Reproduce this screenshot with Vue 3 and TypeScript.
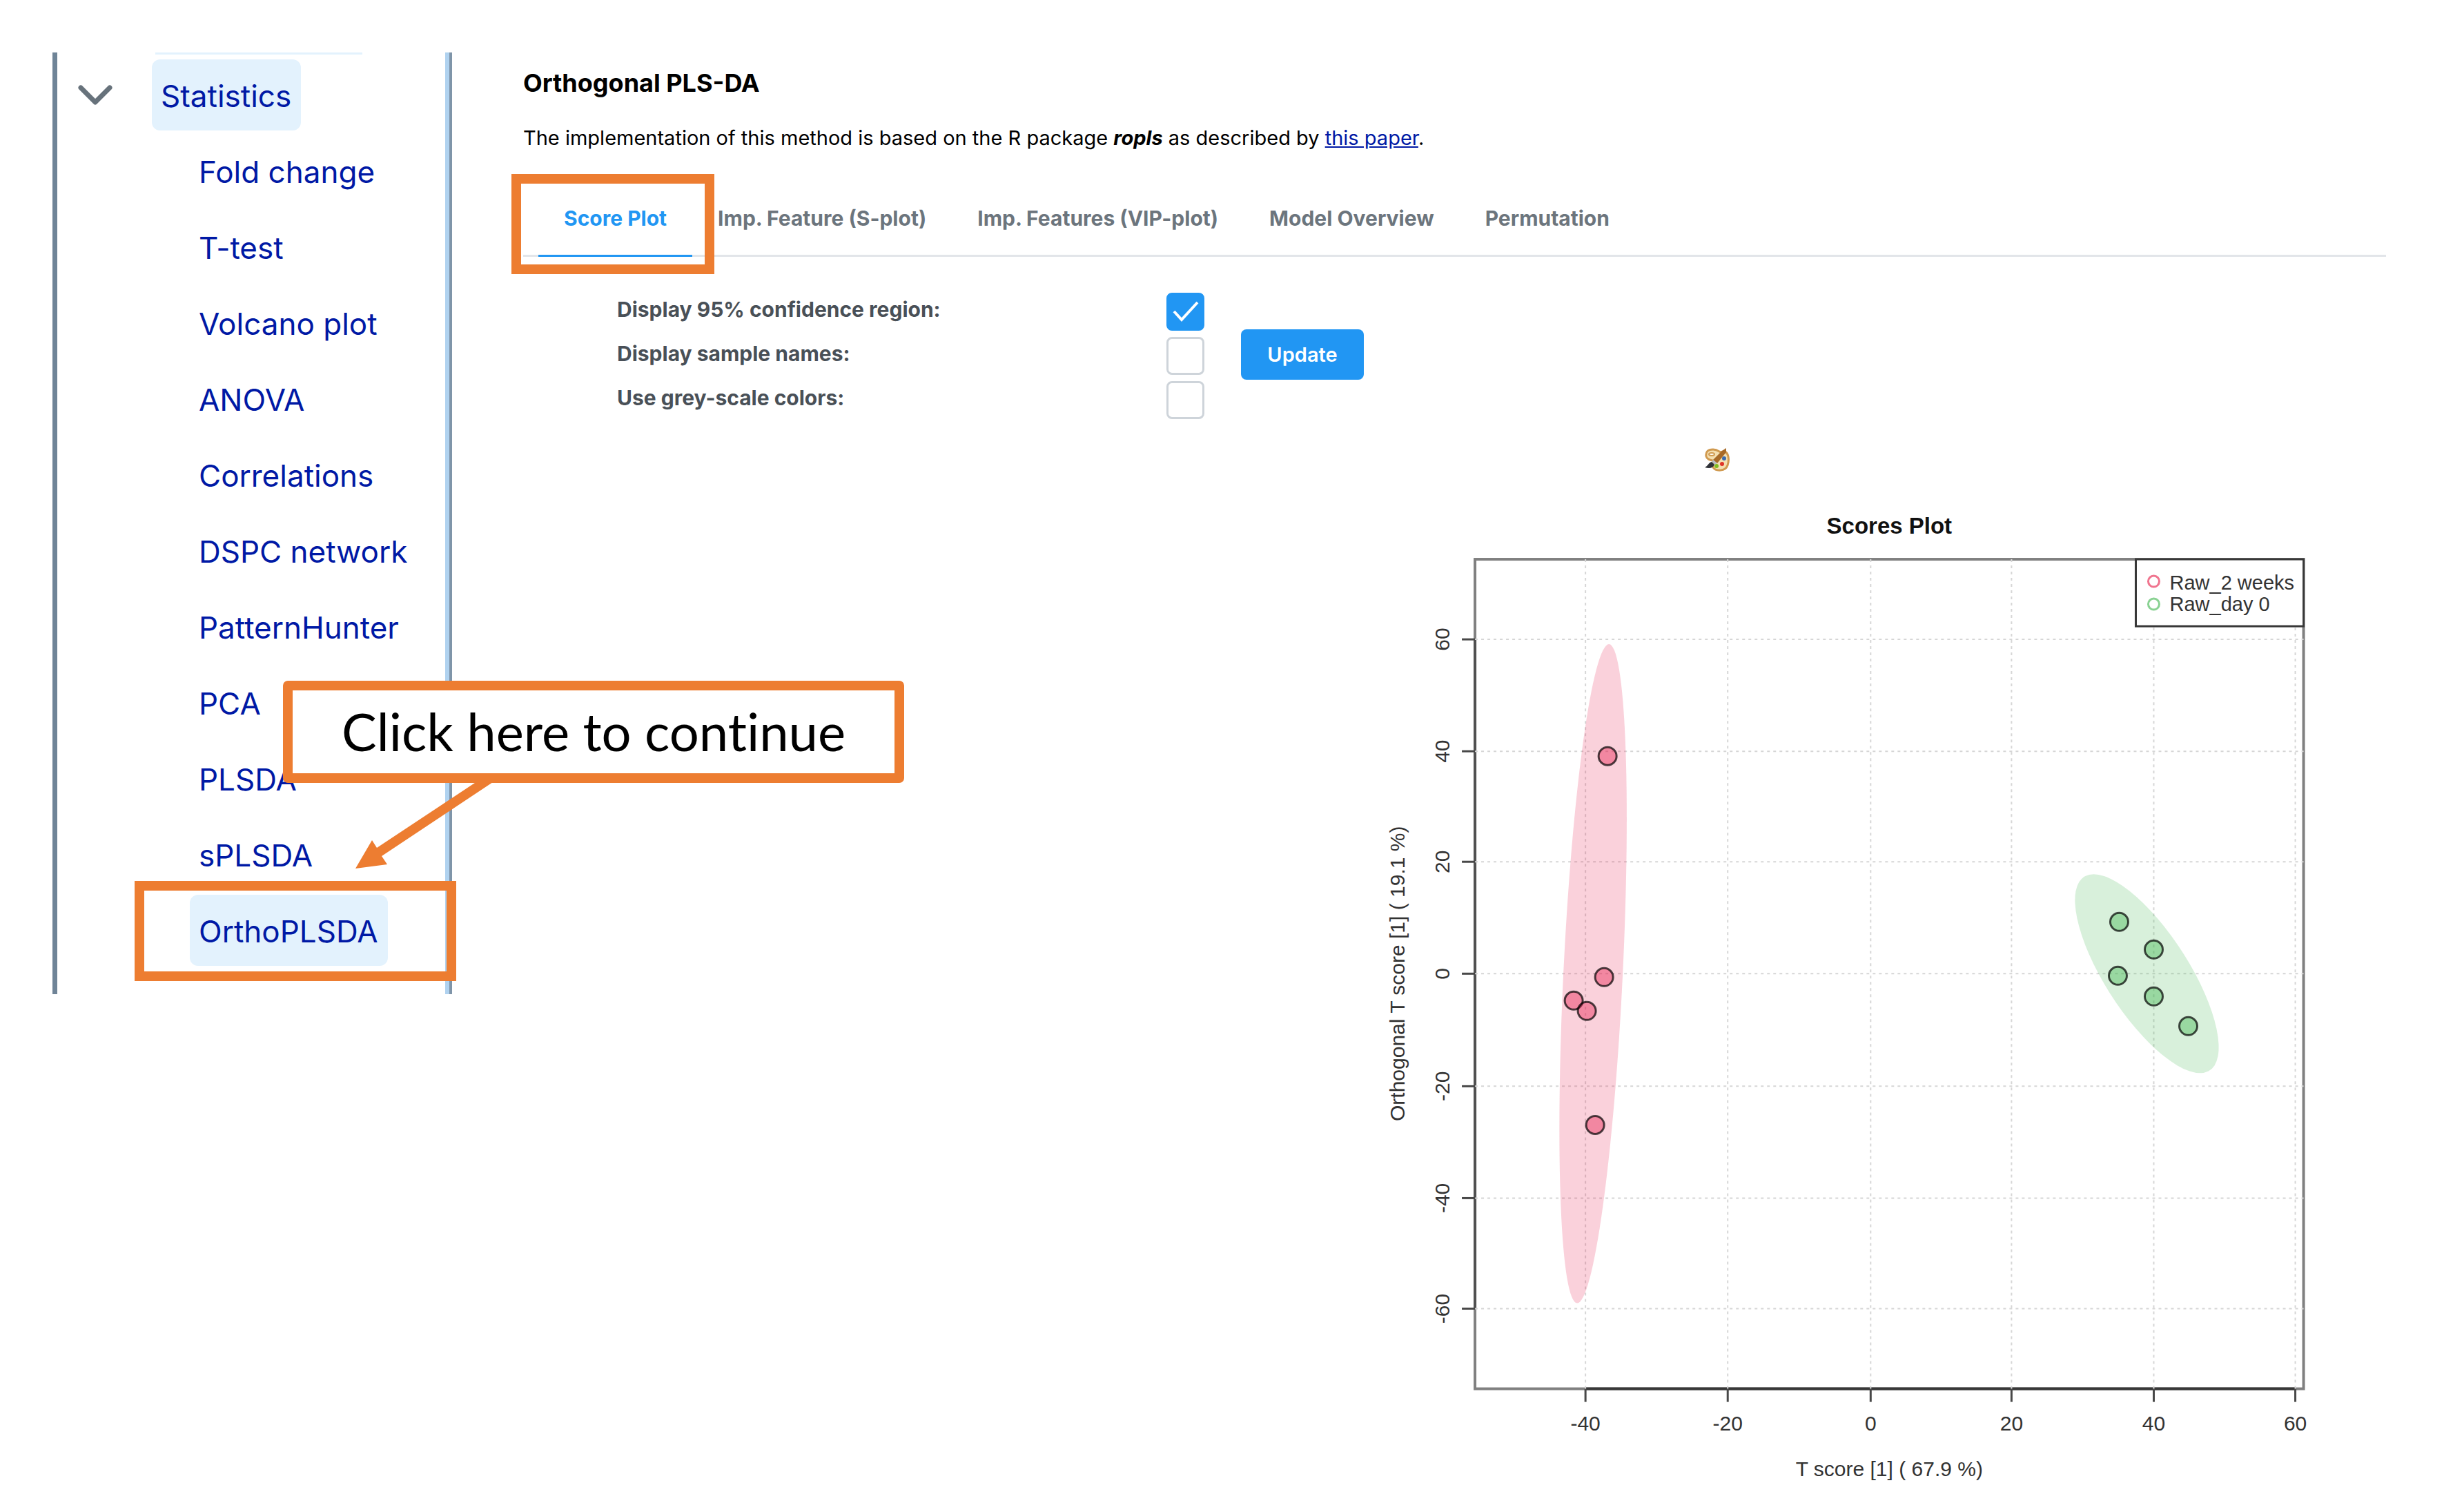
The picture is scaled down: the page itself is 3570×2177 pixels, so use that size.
<script setup lang="ts">
import { ref } from 'vue'

interface Point {
  x: number
  y: number
}

const methods: string[] = [
  'Fold change',
  'T-test',
  'Volcano plot',
  'ANOVA',
  'Correlations',
  'DSPC network',
  'PatternHunter',
  'PCA',
  'PLSDA',
  'sPLSDA',
  'OrthoPLSDA',
]
const currentMethod = 'OrthoPLSDA'

const tabs: string[] = [
  'Score Plot',
  'Imp. Feature (S-plot)',
  'Imp. Features (VIP-plot)',
  'Model Overview',
  'Permutation',
]
const activeTab = ref(tabs[0])

const options = ref([
  { id: 'confidence', label: 'Display 95% confidence region:', checked: true },
  { id: 'names', label: 'Display sample names:', checked: false },
  { id: 'grey', label: 'Use grey-scale colors:', checked: false },
])

const frame = { left: 138, top: 90, right: 1338, bottom: 1291 }

const xTicks = [
  { value: -40, at: 298 },
  { value: -20, at: 504 },
  { value: 0, at: 711 },
  { value: 20, at: 915 },
  { value: 40, at: 1121 },
  { value: 60, at: 1326 },
]
const yTicks = [
  { value: 60, at: 206 },
  { value: 40, at: 368 },
  { value: 20, at: 528 },
  { value: 0, at: 690 },
  { value: -20, at: 853 },
  { value: -40, at: 1015 },
  { value: -60, at: 1175 },
]

const twoWeeks: Point[] = [
  { x: 330, y: 375 },
  { x: 325, y: 695 },
  { x: 281, y: 729 },
  { x: 300, y: 744 },
  { x: 312, y: 909 },
]
const dayZero: Point[] = [
  { x: 1071, y: 615 },
  { x: 1121, y: 655 },
  { x: 1069, y: 693 },
  { x: 1121, y: 723 },
  { x: 1171, y: 766 },
]
</script>

<template>
  <div class="page">
    <nav class="tree" aria-label="Analysis methods">
      <div class="previous"></div>
      <div class="branch">
        <button class="toggle" type="button" aria-label="Collapse Statistics" aria-expanded="true">
          <svg width="50" height="30" viewBox="0 0 50 30" aria-hidden="true">
            <path d="M4 4 L25 25 L46 4" fill="none" stroke="#67727b" stroke-width="7" stroke-linecap="round" stroke-linejoin="round" />
          </svg>
        </button>
        <a class="node selected" href="#statistics">Statistics</a>
      </div>
      <ul class="methods">
        <li v-for="method in methods" :key="method">
          <a class="node" :class="{ selected: method === currentMethod }" :href="'#' + method">{{ method }}</a>
          <span v-if="method === currentMethod" class="mark mark-method"></span>
        </li>
      </ul>
      <svg class="arrow" width="204" height="130" viewBox="0 0 204 130" aria-hidden="true">
        <path d="M181 0 L204 0 L204 1 L40 110 L48 122 L2 128 L26 87 L33 98 Z" fill="#ed7d31" />
      </svg>
      <p class="callout">Click here to continue</p>
    </nav>

    <main class="content">
      <h1>Orthogonal PLS-DA</h1>
      <p class="intro">
        The implementation of this method is based on the R package <b><i>ropls</i></b> as described by
        <a href="#paper">this paper</a>.
      </p>

      <div class="tabs" role="tablist">
        <div v-for="(tab, i) in tabs" :key="tab" class="tab-slot">
          <button
            class="tab"
            :class="{ active: tab === activeTab }"
            type="button"
            role="tab"
            :aria-selected="tab === activeTab"
            @click="activeTab = tab"
          >{{ tab }}</button>
          <span v-if="i === 0" class="mark mark-tab"></span>
        </div>
      </div>

      <form class="settings" @submit.prevent>
        <div class="options">
          <div v-for="option in options" :key="option.id" class="option">
            <label :for="option.id">{{ option.label }}</label>
            <span class="box">
              <input :id="option.id" v-model="option.checked" type="checkbox" />
              <svg v-if="option.checked" width="40" height="32" viewBox="0 0 40 32" aria-hidden="true">
                <path d="M3 16 L14 28 L37 3" fill="none" stroke="#fff" stroke-width="4" />
              </svg>
            </span>
          </div>
        </div>
        <button class="update" type="submit">Update</button>
      </form>

      <figure class="plot">
        <button class="palette" type="button" aria-label="Choose colors">
          <svg width="36" height="34" viewBox="0 0 36 34" aria-hidden="true">
            <path d="M12 2 C4 2 1 6 2 12 C3 16 7 17 11 18 C14 20 10 24 12 28 C16 34 30 34 33 25 C36 16 34 7 29 5 C26 4 24 7 21 5 C18 3 16 2 12 2 Z" fill="#f4dfb0" stroke="#d09a50" stroke-width="3" />
            <ellipse cx="10" cy="9" rx="4" ry="2" fill="#fff" stroke="#d09a50" stroke-width="2" />
            <circle cx="28" cy="15" r="3" fill="#3a6cb0" />
            <circle cx="25" cy="23" r="3" fill="#e03528" />
            <circle cx="17" cy="26" r="3" fill="#80bd20" />
            <path d="M25 4 L31 0 L31 6 L18 22 L12 17 Z" fill="#a86a28" />
            <path d="M12 17 L18 22 L14 24 L10 20 Z" fill="#b8bcc0" />
            <path d="M0 28 C5 26 5 21 10 20 L14 24 C12 29 7 30 0 28 Z" fill="#303238" />
          </svg>
        </button>
        <svg class="chart" viewBox="0 0 1357 1440" role="img" aria-label="Scores Plot">
          <text class="chart-title" x="738" y="53" text-anchor="middle">Scores Plot</text>

          <rect :x="frame.left" :y="frame.top" :width="frame.right - frame.left" :height="frame.bottom - frame.top" fill="none" stroke="#808080" stroke-width="4" />
          <path d="M138 206 V1175" stroke="#505050" stroke-width="4" />
          <path d="M298 1291 H1326" stroke="#383838" stroke-width="4" />

          <g stroke="#484848" stroke-width="3">
            <path v-for="t in xTicks" :key="t.value" :d="`M${t.at} 1291 V1310`" />
            <path v-for="t in yTicks" :key="t.value" :d="`M119 ${t.at} H138`" />
          </g>
          <g stroke="#d6d6d6" stroke-width="2" stroke-dasharray="4 5">
            <path v-for="t in xTicks" :key="t.value" :d="`M${t.at} 1291 V90`" />
            <path v-for="t in yTicks" :key="t.value" :d="`M138 ${t.at} H1338`" />
          </g>

          <g class="label">
            <text v-for="t in xTicks" :key="t.value" :x="t.at" y="1351" text-anchor="middle">{{ t.value }}</text>
            <text v-for="t in yTicks" :key="t.value" :transform="`translate(101 ${t.at}) rotate(-90)`" text-anchor="middle">{{ t.value }}</text>
            <text x="738" y="1417" text-anchor="middle">T score [1] ( 67.9 %)</text>
            <text transform="translate(36 690) rotate(-90)" text-anchor="middle">Orthogonal T score [1] ( 19.1 %)</text>
          </g>

          <circle r="1" transform="matrix(43 0 -23 477 309 690)" fill="#e6194b" fill-opacity="0.2" />
          <circle r="1" transform="matrix(70 0 77 144 1111 690)" fill="#3cb44b" fill-opacity="0.2" />

          <g stroke="#000" stroke-opacity="0.7" stroke-width="3" fill-opacity="0.4">
            <circle v-for="(p, i) in twoWeeks" :key="i" :cx="p.x" :cy="p.y" r="13" fill="#e6194b" />
            <circle v-for="(p, i) in dayZero" :key="i" :cx="p.x" :cy="p.y" r="13" fill="#3cb44b" />
          </g>

          <rect x="1095" y="90" width="243" height="97" fill="#fff" stroke="#383838" stroke-width="3" />
          <circle cx="1121" cy="122" r="8" fill="none" stroke="#f0758f" stroke-width="3" />
          <circle cx="1121" cy="155" r="8" fill="none" stroke="#8ad293" stroke-width="3" />
          <g class="label legend-label">
            <text x="1144" y="134">Raw_2 weeks</text>
            <text x="1144" y="165">Raw_day 0</text>
          </g>
        </svg>
      </figure>
    </main>
  </div>
</template>

<style>
body {
  margin: 0;
  background: #fff;
}
</style>

<style scoped>
.page {
  display: flex;
  align-items: flex-start;
  gap: 103px;
  box-sizing: border-box;
  padding: 76px 113px 0 76px;
  font-family: Inter, "Liberation Sans", sans-serif;
  font-size: 30px;
  color: #000;
}

button {
  margin: 0;
  padding: 0;
  border: 0;
  background: none;
  font: inherit;
  color: inherit;
}

.tree {
  position: relative;
  flex: none;
  box-sizing: border-box;
  width: 579px;
  padding-bottom: 41px;
  border-left: 7px solid #6f8497;
  border-right: 4px solid #7f95a9;
  box-shadow: inset -6px 0 #b0d2ef;
  font-size: 44px;
}

.previous {
  width: 300px;
  height: 3px;
  margin: 0 0 7px 142px;
  background: #e3f2fd;
}

.branch {
  display: flex;
  align-items: center;
  padding-left: 30px;
}

.toggle {
  width: 107px;
  height: 50px;
  text-align: left;
}

.toggle svg {
  display: block;
}

.node {
  display: inline-block;
  padding: 3px 14px 0 13px;
  border-radius: 12px;
  line-height: 100px;
  color: #0019a5;
  text-decoration: none;
}

.selected {
  background: #e3f2fd;
}

.methods {
  display: flex;
  flex-direction: column;
  gap: 7px;
  margin: 7px 0 0;
  padding: 0 0 0 192px;
  list-style: none;
}

.methods li {
  position: relative;
  height: 103px;
}

.mark {
  position: absolute;
  box-sizing: border-box;
  border: 14px solid #ed7d31;
  pointer-events: none;
}

.mark-method {
  top: -20px;
  left: -80px;
  width: 466px;
  height: 145px;
}

.mark-tab {
  top: -10px;
  left: -39px;
  right: -32px;
  height: 145px;
}

.callout {
  position: absolute;
  top: 910px;
  left: 327px;
  box-sizing: border-box;
  width: 900px;
  height: 148px;
  margin: 0;
  border: 14px solid #ed7d31;
  border-radius: 7px;
  background: #fff;
  font-family: Lato, sans-serif;
  font-size: 76px;
  line-height: 118px;
  font-variant-ligatures: none;
  text-align: center;
  white-space: nowrap;
}

.arrow {
  position: absolute;
  top: 1054px;
  left: 430px;
}

.content {
  flex: 1;
  min-width: 0;
  padding-top: 22px;
}

h1 {
  margin: 0;
  font-size: 36px;
  line-height: 44px;
  font-weight: 700;
}

.intro {
  margin: 40px 0 44px;
  font-size: 29px;
  line-height: 36px;
}

.intro a {
  color: #0019a5;
}

.tabs {
  display: flex;
  padding-left: 22px;
  box-shadow: inset 0 -3px #e2e5e9;
}

.tab-slot {
  position: relative;
}

.tab {
  height: 110px;
  padding: 0 37px;
  border-bottom: 3px solid transparent;
  font-weight: 700;
  color: #6c757d;
  white-space: nowrap;
}

.tab.active {
  border-bottom-color: #2196f3;
  color: #2196f3;
}

.settings {
  display: flex;
  align-items: center;
  gap: 53px;
  padding: 47px 0 0 136px;
}

.option {
  display: flex;
  align-items: center;
  height: 64px;
}

.option label {
  width: 796px;
  padding-bottom: 6px;
  font-weight: 700;
  color: #495057;
}

.box {
  display: grid;
  place-items: center;
}

.box input,
.box svg {
  grid-area: 1 / 1;
}

.box svg {
  pointer-events: none;
}

.box input {
  appearance: none;
  box-sizing: border-box;
  width: 55px;
  height: 55px;
  margin: 0;
  border: 3px solid #ced4da;
  border-radius: 8px;
  background: #fff;
}

.box input:checked {
  border-color: #2196f3;
  background: #2196f3;
}

.update {
  width: 178px;
  height: 73px;
  margin-bottom: 4px;
  border-radius: 8px;
  background: #2196f3;
  font-size: 29px;
  font-weight: 600;
  color: #fff;
}

.plot {
  width: 50.3%;
  margin: 38px 100px 0 auto;
}

.palette {
  display: block;
  width: 36px;
  height: 34px;
  margin: 0 0 37px 471px;
}

.palette svg,
.chart {
  display: block;
}

.chart {
  width: 100%;
  font-family: "Liberation Sans", Arial, sans-serif;
}

.chart-title {
  font-size: 33px;
  font-weight: 700;
  fill: #111;
}

.label {
  font-size: 30px;
  fill: #333;
}

.legend-label {
  font-size: 29px;
}
</style>
